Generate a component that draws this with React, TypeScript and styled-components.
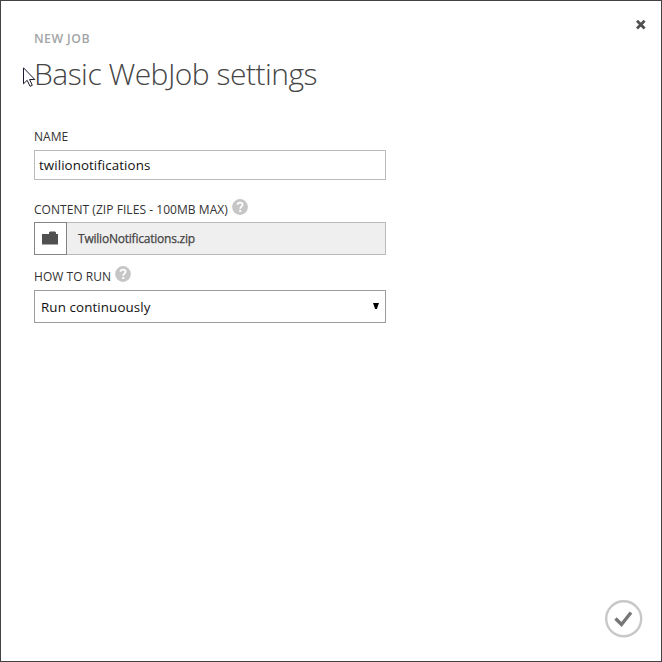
import React from "react";
import styled, { createGlobalStyle } from "styled-components";

const GlobalStyle = createGlobalStyle`
  * { box-sizing: border-box; }
  body { margin: 0; background: #fff; font-family: "Open Sans", "Noto Sans", sans-serif; }
`;

const Dialog = styled.main`
  position: relative;
  display: flex;
  flex-direction: column;
  width: 662px;
  height: 662px;
  padding: 16px 18px 23px 33px;
  border: 1px solid #434245;
  background: #fff;
  overflow: hidden;
`;

/* Slivers of the dimmed page that show along the dialog's edges. */
const EdgeTint = styled.i<{ $side: "left" | "right"; $top: number; $height: number; $color: string }>`
  position: absolute;
  ${(p) => p.$side}: -1px;
  top: ${(p) => p.$top}px;
  width: 1px;
  height: ${(p) => p.$height}px;
  background: ${(p) => p.$color};
`;

const CloseButton = styled.button`
  align-self: flex-end;
  display: flex;
  margin-right: -5px;
  padding: 1px;
  border: 0;
  background: none;
`;

const Eyebrow = styled.div`
  margin-top: -1px;
  height: 18px;
  line-height: 18px;
  font-size: 12.3px;
  font-weight: 600;
  letter-spacing: 0.45px;
  color: #a3a5a8;
`;

const Title = styled.h1`
  margin: 5px 0 0;
  height: 42px;
  line-height: 42px;
  font-size: 30px;
  font-weight: 300;
  letter-spacing: -0.52px;
  white-space: nowrap;
  color: #454545;
`;

const Form = styled.form`
  width: 352px;
  margin-top: 33px;
`;

const Label = styled.label<{ $height: number }>`
  display: flex;
  align-items: flex-start;
  gap: 4px;
  height: ${(p) => p.$height}px;
  line-height: 18px;
  font-size: 12px;
  letter-spacing: 0.05px;
  white-space: nowrap;
  color: #333;
`;

const LabelText = styled.span`
  display: block;
`;

const HelpIcon = styled.svg`
  display: block;
  flex: none;
  width: 16px;
  height: 16px;
  margin-top: -2px;
`;

const TextBox = styled.div`
  height: 30px;
  margin-bottom: 21px;
  padding-left: 4px;
  border: 1px solid #bababa;
  line-height: 29px;
  font-size: 13.33px;
  letter-spacing: 0.08px;
  color: #111;
`;

const FileBox = styled.div`
  display: flex;
  height: 33px;
  margin-bottom: 13px;
  border: 1px solid #bababa;
  background: #efefef;
`;

const BrowseButton = styled.button`
  display: flex;
  align-items: center;
  justify-content: center;
  width: 33px;
  height: 33px;
  margin: -1px 0 0 -1px;
  padding: 0 1px 1px 0;
  border: 1px solid #858585;
  background: #fff;
`;

const FileName = styled.span`
  margin-left: 11px;
  line-height: 32px;
  font-size: 12px;
  -webkit-text-stroke: 0.25px #444;
  letter-spacing: -0.22px;
  color: #444;
`;

const SelectBox = styled.div`
  display: flex;
  justify-content: space-between;
  height: 33px;
  padding: 0 6px 0 6px;
  border: 1px solid #9c9c9c;
  line-height: 32px;
  font-size: 13.33px;
  letter-spacing: 0.12px;
  color: #111;
`;

const SelectArrow = styled.svg`
  margin-top: 12px;
`;

const ConfirmButton = styled.button`
  display: flex;
  align-self: flex-end;
  margin-top: auto;
  padding: 0;
  border: 0;
  background: none;
`;

const Pointer = styled.svg`
  position: absolute;
  left: 22px;
  top: 66px;
`;

const Help = () => (
  <HelpIcon viewBox="0 0 16 16">
    <circle cx="8" cy="8" r="7.9" fill="#c6c6c6" />
    <path d="M5.5 5.8C5.6 4.3 6.6 3.6 8 3.6c1.5 0 2.6.8 2.6 2.1 0 1.9-2.4 1.9-2.4 4" fill="none" stroke="#fff" strokeWidth="1.8" />
    <rect x="7.2" y="10.9" width="2" height="2" fill="#fff" />
  </HelpIcon>
);

export default function App() {
  return (
    <>
      <GlobalStyle />
      <Dialog>
        <EdgeTint $side="left" $top={134} $height={16} $color="#143b4b" />
        <EdgeTint $side="left" $top={154} $height={13} $color="#143b4b" />
        <EdgeTint $side="right" $top={103} $height={8} $color="#08080a" />
        <EdgeTint $side="right" $top={134} $height={16} $color="#143b4b" />
        <CloseButton type="button" aria-label="Close">
          <svg width="12" height="12" viewBox="0 0 12 12">
            <path d="M2 2.7 9.6 10.5M9.6 2.7 2 10.5" stroke="#505050" strokeWidth="2.7" />
          </svg>
        </CloseButton>
        <Eyebrow>NEW JOB</Eyebrow>
        <Title>Basic WebJob settings</Title>
        <Form>
          <Label $height={22}><LabelText>NAME</LabelText></Label>
          <TextBox>twilionotifications</TextBox>
          <Label $height={21}>
            <LabelText>CONTENT (ZIP FILES - 100MB MAX)</LabelText>
            <Help />
          </Label>
          <FileBox>
            <BrowseButton type="button" aria-label="Browse">
              <svg width="16" height="14" viewBox="0 0 16 14">
                <path d="M0 3h7V1.5L8 .5h5l1 1V3h2v10.5H0z" fill="#505050" />
              </svg>
            </BrowseButton>
            <FileName>TwilioNotifications.zip</FileName>
          </FileBox>
          <Label $height={22}>
            <LabelText>HOW TO RUN</LabelText>
            <Help />
          </Label>
          <SelectBox>
            <span>Run continuously</span>
            <SelectArrow width="6" height="6" viewBox="0 0 6 6">
              <path d="M0 0h6L3.8 6H2.2z" fill="#000" />
            </SelectArrow>
          </SelectBox>
        </Form>
        <ConfirmButton type="button" aria-label="Finish">
          <svg width="38" height="38" viewBox="0 0 38 38">
            <circle cx="18.7" cy="18.7" r="17.5" fill="none" stroke="#c8c8c8" strokeWidth="2.4" />
            <path d="m10.5 18.5 6 6 9.5-12" fill="none" stroke="#777" strokeWidth="3.4" />
          </svg>
        </ConfirmButton>
        <Pointer width="13" height="21" viewBox="0 0 13 21">
          <path d="M.5.8v16l3.7-3.5 2.8 6 2.3-1-2.7-5.8h5.2z" fill="#fff" stroke="#1c1b2b" />
        </Pointer>
      </Dialog>
    </>
  );
}
